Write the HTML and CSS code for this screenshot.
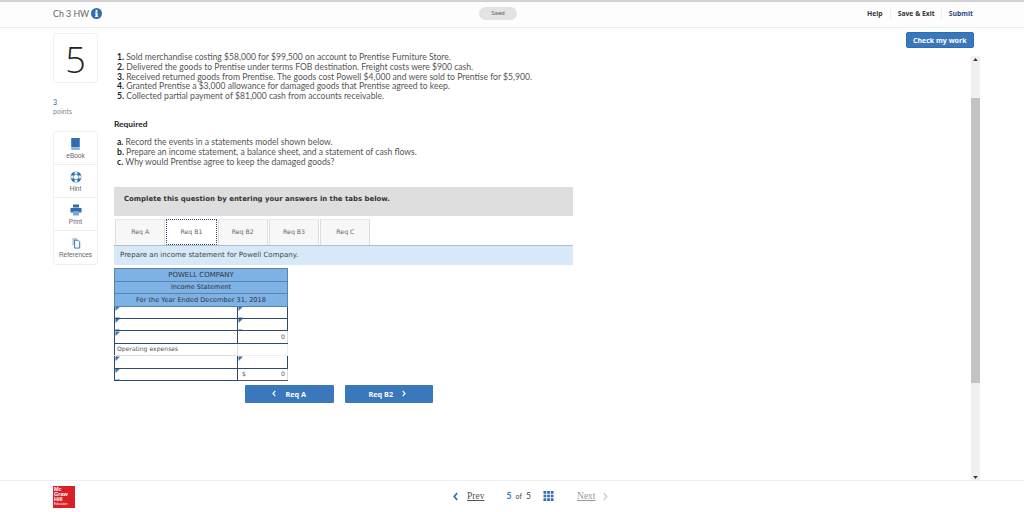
FILE: index.html
```html
<!DOCTYPE html>
<html lang="en">
<head>
<meta charset="utf-8">
<title>Ch 3 HW</title>
<link rel="stylesheet" href="styles.css">
</head>
<body>
<div class="page">
  <header class="top">
    <div class="title">
      <span>Ch 3 HW</span>
      <svg class="info" viewBox="0 0 12 12" width="12" height="12"><circle cx="6" cy="6" r="6" fill="#2f6db0"/><rect x="5" y="5" width="2.2" height="4.6" fill="#fff"/><rect x="4.3" y="8.6" width="3.6" height="1" fill="#fff"/><rect x="4.3" y="5" width="2" height="1" fill="#fff"/><circle cx="6" cy="3.2" r="1.2" fill="#fff"/></svg>
    </div>
    <div class="saved">Saved</div>
    <nav class="topnav">
      <a class="nav-help">Help</a>
      <a class="nav-save">Save &amp; Exit</a>
      <a class="nav-submit">Submit</a>
    </nav>
  </header>
  <main class="main">
    <aside class="rail">
      <div class="qnum">5</div>
      <div class="pts"><b>3</b><span>points</span></div>
      <div class="tools">
        <div class="tool"><svg viewBox="0 0 12 14" width="11" height="12"><rect x="1" y="0" width="10" height="11" fill="#2f6db0"/><rect x="1" y="11.500" width="10" height="2.500" fill="#8fb4da"/></svg><span>eBook</span></div>
        <div class="tool"><svg viewBox="0 0 12 12" width="12" height="12"><circle cx="6" cy="6" r="5.5" fill="#2f6db0"/><circle cx="6" cy="6" r="2.2" fill="#fff"/><path d="M4.600 .6h2.800v3H4.600zM4.600 8.400h2.800v3H4.600zM.6 4.600h3v2.800h-3zM8.400 4.600h3v2.800h-3z" fill="#dce9f5"/></svg><span>Hint</span></div>
        <div class="tool"><svg viewBox="0 0 12 12" width="12" height="12"><rect x="3" y="0.500" width="6" height="3" fill="#2f6db0"/><rect x="0.500" y="4" width="11" height="4.500" fill="#2f6db0"/><rect x="3" y="7" width="6" height="4.500" fill="#7ba6d2"/></svg><span>Print</span></div>
        <div class="tool"><svg viewBox="0 0 12 13" width="12" height="12"><path d="M2 1h5v8H2z" fill="#b9cde2"/><path d="M4.500 3.500h4l1.500 1.500v7H4.500z" fill="#fff" stroke="#2f6db0"/></svg><span>References</span></div>
      </div>
    </aside>
    <div class="work">
      <div class="checkrow"><button class="check">Check my work</button></div>
      <div class="scrollarea">
        <div class="content">
          <ol class="events">
            <li><b>1.</b> Sold merchandise costing $58,000 for $99,500 on account to Prentise Furniture Store.</li>
            <li><b>2.</b> Delivered the goods to Prentise under terms FOB destination. Freight costs were $900 cash.</li>
            <li><b>3.</b> Received returned goods from Prentise. The goods cost Powell $4,000 and were sold to Prentise for $5,900.</li>
            <li><b>4.</b> Granted Prentise a $3,000 allowance for damaged goods that Prentise agreed to keep.</li>
            <li><b>5.</b> Collected partial payment of $81,000 cash from accounts receivable.</li>
          </ol>
          <h2 class="req">Required</h2>
          <ol class="parts">
            <li><b>a.</b> Record the events in a statements model shown below.</li>
            <li><b>b.</b> Prepare an income statement, a balance sheet, and a statement of cash flows.</li>
            <li><b>c.</b> Why would Prentise agree to keep the damaged goods?</li>
          </ol>
          <div class="banner">Complete this question by entering your answers in the tabs below.</div>
          <div class="tabs">
            <div class="tab">Req A</div>
            <div class="tab active">Req B1</div>
            <div class="tab">Req B2</div>
            <div class="tab">Req B3</div>
            <div class="tab">Req C</div>
          </div>
          <div class="prompt">Prepare an income statement for Powell Company.</div>
          <table class="stmt">
            <colgroup><col class="c1"><col class="c2"></colgroup>
            <tr class="hd hd-co"><td colspan="2">POWELL COMPANY</td></tr>
            <tr class="hd hd-title"><td colspan="2">Income Statement</td></tr>
            <tr class="hd hd-date"><td colspan="2">For the Year Ended December 31, 2018</td></tr>
            <tr><td class="inp"></td><td class="inp"></td></tr>
            <tr><td class="inp"></td><td class="inp"></td></tr>
            <tr><td class="inp"></td><td class="val"><span></span><span>0</span></td></tr>
            <tr><td class="lab">Operating expenses</td><td class="blank"></td></tr>
            <tr><td class="inp"></td><td class="inp"></td></tr>
            <tr><td class="inp"></td><td class="val total"><span>$</span><span>0</span></td></tr>
          </table>
          <div class="navs">
            <button class="step step-prev"><svg class="chev" viewBox="0 0 6 10" width="4" height="7"><path d="M5 1L1.500 5 5 9" fill="none" stroke="#fff" stroke-width="1.800"/></svg>Req A</button>
            <button class="step step-next">Req B2<svg class="chev" viewBox="0 0 6 10" width="4" height="7"><path d="M1 1l3.500 4L1 9" fill="none" stroke="#fff" stroke-width="1.800"/></svg></button>
          </div>
        </div>
        <div class="sbar">
          <svg class="arrow" viewBox="0 0 6 4" width="5" height="3"><path d="M3 0l3 4H0z" fill="#333"/></svg>
          <div class="thumb"></div>
          <svg class="arrow" viewBox="0 0 6 4" width="5" height="3"><path d="M3 4l3-4H0z" fill="#333"/></svg>
        </div>
      </div>
    </div>
  </main>
  <footer class="foot">
    <div class="logo"><span>Mc</span><span>Graw</span><span>Hill</span><small>Education</small></div>
    <div class="pager">
      <svg viewBox="0 0 6 10" width="5" height="9"><path d="M5 1L1.500 5 5 9" fill="none" stroke="#2f6db0" stroke-width="2"/></svg>
      <span class="serif">Prev</span>
      <span class="count"><b>5</b> <i>of</i> 5</span>
      <svg viewBox="0 0 11 11" width="11" height="10"><path d="M0 0h3v3H0zM4 0h3v3H4zM8 0h3v3H8zM0 4h3v3H0zM4 4h3v3H4zM8 4h3v3H8zM0 8h3v3H0zM4 8h3v3H4zM8 8h3v3H8z" fill="#2f6db0"/></svg>
      <span class="serif off">Next</span>
      <svg viewBox="0 0 6 10" width="5" height="9"><path d="M1 1l3.500 4L1 9" fill="none" stroke="#c5d8ec" stroke-width="2"/></svg>
    </div>
  </footer>
</div>
</body>
</html>
```
FILE: styles.css
```css
* { box-sizing: border-box; }
html, body { margin: 0; height: 100%; background: #fff; }
body { font-family: Lato, "Open Sans", sans-serif; color: #444; overflow: hidden; }
.page { width: 1024px; height: 512px; display: flex; flex-direction: column; }

.top { height: 28px; flex: none; border-top: 2px solid #d2d2d2; border-bottom: 1px solid #ececec; background: #fdfdfd; display: flex; align-items: center; padding: 0 51px 2px 53px; }
.title { display: flex; align-items: center; gap: 2px; font-size: 8.800px; color: #666; width: 426px; }
.info { width: 11px; height: 11px; }
.saved { width: 38px; height: 13px; border-radius: 7px; background: #e3e3e3; font-size: 5px; line-height: 13px; text-align: center; color: #555; }
.topnav { margin-left: auto; display: flex; font-family: "Open Sans", sans-serif; font-size: 6.800px; font-weight: 700; color: #333; }
.topnav a { padding: 1px 7px; border-right: 1px solid #eee; white-space: nowrap; }
.topnav a.nav-save { padding-right: 6px; }
.topnav a:last-child { border: 0; padding-right: 0; }
.nav-submit { color: #1f4a80; }

.main { flex: 1; min-height: 0; display: flex; }
.rail { width: 114px; flex: none; padding: 5px 0 0 53px; display: flex; flex-direction: column; align-items: flex-start; }
.qnum { width: 45px; height: 50px; border: 1px solid #f0f0f0; border-radius: 3px; font-family: "Open Sans", sans-serif; font-size: 36px; font-weight: 300; line-height: 51px; text-align: center; color: #222; }
.pts { margin-top: 15px; display: flex; flex-direction: column; font-size: 7px; color: #888; line-height: 9px; }
.pts b { font-weight: 400; color: #2f5f96; font-size: 7px; }
.tools { margin-top: 15px; width: 45px; border: 1px solid #f0f0f0; border-radius: 3px; }
.tool { height: 33px; padding-top: 6px; display: flex; flex-direction: column; align-items: center; border-bottom: 1px solid #eee; font-family: "Liberation Sans", sans-serif; font-size: 6.500px; line-height: 9px; color: #666; }
.tool:last-child { border-bottom: 0; }
.tool span { margin-top: 1px; }

.work { flex: 1; min-width: 0; display: flex; flex-direction: column; }
.checkrow { height: 25px; flex: none; padding: 4px 50px 0 0; display: flex; justify-content: flex-end; align-items: flex-start; }
.check { width: 68.500px; height: 16px; padding: 0; border: 1px solid #2f6db0; border-radius: 2px; background: #3a77bb; color: #fff; font-family: "Open Sans", sans-serif; font-size: 7px; font-weight: 700; }
.scrollarea { flex: 1; min-height: 0; display: flex; padding-right: 44px; }
.content { flex: 1; min-width: 0; }

.events, .parts { list-style: none; margin: 0; padding: 0 0 0 3px; font-size: 8.600px; line-height: 9.800px; color: #555; white-space: nowrap; }
.events b, .parts b { color: #222; }
.req { margin: 17px 0 0; padding: 0; font-size: 8.400px; line-height: 10px; font-weight: 700; color: #222; }
.parts { margin-top: 9px; }
.banner { margin-top: 20px; width: 459px; height: 29px; background: #dedede; padding-left: 10px; font-family: "DejaVu Sans", sans-serif; font-size: 6.950px; font-weight: 700; line-height: 24px; color: #333; }
.tabs { margin: 3px 0 0 1px; display: flex; height: 26px; }
.tab { width: 50.300px; margin-right: 1px; background: #f7f7f7; border-left: 1px solid #ddd; border-right: 1px solid #ddd; border-top: 1px solid #e8e8e8; font-family: "DejaVu Sans", sans-serif; font-size: 6.200px; line-height: 24px; text-align: center; color: #666; }
.tab.active { background: #fff; border: 1px dotted #2a4a78; }
.prompt { width: 459px; height: 20px; background: #d7e9f8; border-top: 1px solid #a9bfd2; padding-left: 6px; font-family: "DejaVu Sans", sans-serif; font-size: 7.050px; line-height: 18px; color: #444; }

.stmt { margin-top: 3px; width: 173px; border-collapse: collapse; table-layout: fixed; font-family: "DejaVu Sans", sans-serif; font-size: 6.100px; color: #555; }
.c1 { width: 123px; }
.c2 { width: 50px; }
.stmt td { height: 12.400px; padding: 0 2px; line-height: 10px; white-space: nowrap; overflow: hidden; }
.hd td { background: #7eb2e6; border: 1px solid #5a83ac; text-align: center; color: #333; }
.hd-co td { font-size: 7px; }
.hd-title td { font-size: 6.500px; }
.hd-date td { font-size: 6.600px; }
.inp { border: 1px solid #2f4a6c; background: linear-gradient(135deg, #2f6db0 3px, #fff 3px); }
.val { border: 1px solid #dcdcdc; border-left: 1px solid #2f4a6c; border-bottom: 1px solid #2f4a6c; background: #fff; }
.val span { display: inline-block; }
.val span:first-child { width: 12px; padding-left: 2px; }
.val span:last-child { float: right; }
.val.total { border-bottom: 1px solid #555; }
.lab { border: 1px solid #ddd; border-left: 1px solid #2f4a6c; }
.blank { border: 1px solid #eee; }

.navs { margin: 4px 0 0 131px; display: flex; gap: 11px; }
.step { width: 88.500px; height: 18px; padding: 0; border: 0; border-radius: 1px; background: #3a77bb; color: #fff; font-family: "Open Sans", sans-serif; font-size: 7.300px; font-weight: 700; display: flex; align-items: center; justify-content: center; }
.step-prev { padding-right: 9px; }
.step-next { padding-left: 6px; }
.chev { margin: 0 9px; flex: none; }

.sbar { width: 9px; flex: none; height: 425px; margin-top: 3px; background: #f0f0f0; display: flex; flex-direction: column; align-items: center; justify-content: space-between; padding: 2px 0; }
.thumb { width: 9px; height: 285px; margin-top: 33px; margin-bottom: 90px; background: #c3c3c3; flex: none; }
.arrow { flex: none; }

.foot { height: 32px; flex: none; border-top: 1px solid #eee; padding: 5px 0 0 53px; display: flex; align-items: flex-start; }
.logo { width: 22px; height: 22px; background: #d9202a; color: #fff; font-family: "Liberation Sans", sans-serif; font-size: 5.500px; font-weight: 700; line-height: 5px; padding: 1px; display: flex; flex-direction: column; }
.logo small { font-size: 3px; line-height: 4px; font-weight: 400; }
.pager { margin-left: 378px; margin-top: 5px; display: flex; align-items: center; font-size: 8.500px; color: #444; }
.pager svg { flex: none; }
.serif { font-family: "Liberation Serif", serif; font-size: 9.500px; margin-left: 9px; text-decoration: underline; color: #555; }
.serif.off { color: #999; margin: 0 8px 0 23px; }
.count { margin: 0 12px 0 22px; word-spacing: 2px; }
.count b { color: #2f6db0; }
.count i { font-style: normal; font-size: 7px; }
```
